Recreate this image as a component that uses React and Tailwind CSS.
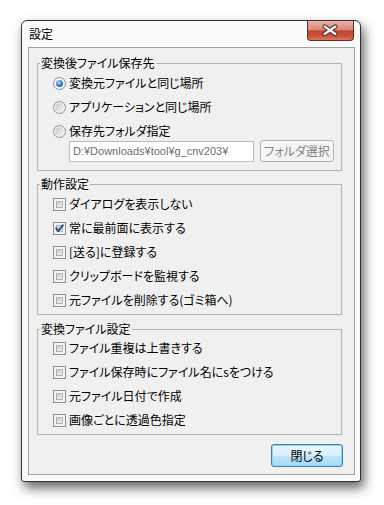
import React from "react";

function Checkbox({ checked }) {
  return (
    <div className="w-[13px] h-[13px] shrink-0 border border-[#8e8f8f] bg-[#f4f4f4] p-[2px] relative">
      <div className="w-full h-full border border-[#aeb3b9] bg-gradient-to-br from-[#c9c9c9] to-[#f4f4f4]" />
      {checked && (
        <svg className="absolute left-0 top-0" width="11" height="11" viewBox="0 0 11 11">
          <path d="M2.2 5.4 L4.4 8 L8.8 2.3" fill="none" stroke="#2a4a8c" strokeWidth="1.9" strokeLinecap="square" />
        </svg>
      )}
    </div>
  );
}

function Radio({ checked }) {
  return (
    <div className="w-[13px] h-[13px] shrink-0 rounded-full border border-[#8e8f8f] bg-[#f4f4f4] flex items-center justify-center">
      {checked ? (
        <div className="w-[7px] h-[7px] rounded-full bg-[radial-gradient(circle_at_40%_35%,#b9e2fb_0%,#3c88cf_45%,#0f3f82_100%)]" />
      ) : (
        <div className="w-[9px] h-[9px] rounded-full bg-gradient-to-br from-[#c6c6c6] to-[#f8f8f8]" />
      )}
    </div>
  );
}

function Row({ children }) {
  return <div className="h-[24px] flex items-center pl-[15px] gap-[3px]">{children}</div>;
}

function Group({ title, className, children }) {
  return (
    <fieldset className={"border border-[#b3b3b3] " + className}>
      <legend className="ml-[2px] px-[1px] text-[12px] leading-[14px] text-black">{title}</legend>
      {children}
    </fieldset>
  );
}

export default function App() {
  return (
    <div className="w-[384px] h-[505px] bg-white pl-[21px] pt-[20px] font-['Noto_Sans_CJK_JP',sans-serif] [font-feature-settings:'palt'] text-[12px] leading-[14px] text-black">
      <div className="w-[340px] flex flex-col border border-[#333333] rounded-t-[6px] rounded-b-[3px] bg-[#fafafa] shadow-[3px_6px_12px_rgba(0,0,0,0.62)]">
        {/* title bar */}
        <div className="h-[26px] flex items-start">
          <div className="pl-[7px] pt-[6px] text-[12px] leading-[14px]">設定</div>
          <div className="ml-auto mr-[6px] w-[47px] h-[20px] rounded-b-[4px] border border-t-0 border-[#6e2a20] bg-[linear-gradient(to_bottom,#eab1a5_0%,#dd8a79_45%,#c5452f_52%,#c9523a_80%,#dc7a5f_100%)] flex items-center justify-center">
            <svg width="47" height="19" viewBox="0 0 47 19">
              <path d="M17.5 5.5 L28.5 13 M28.5 5.5 L17.5 13" stroke="#4b3a3a" strokeWidth="4.6" strokeLinecap="round" />
              <path d="M17.5 5.5 L28.5 13 M28.5 5.5 L17.5 13" stroke="#ffffff" strokeWidth="2.4" strokeLinecap="round" />
            </svg>
          </div>
        </div>
        {/* frame */}
        <div className="pl-[6px] pr-[5px] pb-[6px]">
          <div className="border border-[#a3a3a3] bg-[#f0f0f0] pt-[8px] pl-[8px] pr-[12px] pb-[7px] flex flex-col">
            <Group title="変換後ファイル保存先" className="pb-[8px]">
              <div className="pt-[1px]">
                <Row><Radio checked /><span>変換元ファイルと同じ場所</span></Row>
                <Row><Radio /><span>アプリケーションと同じ場所</span></Row>
                <Row><Radio /><span>保存先フォルダ指定</span></Row>
                <div className="-mt-[3px] pl-[31px] flex items-center gap-[6px]">
                  <div className="w-[185px] h-[21px] border border-[#b9bcc1] bg-white pl-[3px] flex items-center text-[#6d6d6d] text-[11px] [font-feature-settings:normal] font-['Liberation_Sans',sans-serif]">
                    D:¥Downloads¥tool¥g_cnv203¥
                  </div>
                  <div className="w-[74px] h-[22px] rounded-[3px] border border-[#adb2b5] bg-[#f4f4f4] flex items-center justify-center text-[#838383]">
                    フォルダ選択
                  </div>
                </div>
              </div>
            </Group>
            <Group title="動作設定" className="mt-[6px] pb-[2px]">
              <div className="pt-[1px]">
                <Row><Checkbox /><span>ダイアログを表示しない</span></Row>
                <Row><Checkbox checked /><span>常に最前面に表示する</span></Row>
                <Row><Checkbox /><span>[送る]に登録する</span></Row>
                <Row><Checkbox /><span>クリップボードを監視する</span></Row>
                <Row><Checkbox /><span>元ファイルを削除する(ゴミ箱へ)</span></Row>
              </div>
            </Group>
            <Group title="変換ファイル設定" className="mt-[7px] pb-[2px]">
              <div>
                <Row><Checkbox /><span>ファイル重複は上書きする</span></Row>
                <Row><Checkbox /><span>ファイル保存時にファイル名にsをつける</span></Row>
                <Row><Checkbox /><span>元ファイル日付で作成</span></Row>
                <Row><Checkbox /><span>画像ごとに透過色指定</span></Row>
              </div>
            </Group>
            <div className="mt-[9px] flex justify-end pr-[11px] -mr-[12px]">
              <div className="w-[72px] h-[23px] rounded-[3px] border border-[#3c7fb1] shadow-[0_0_0_1px_#8fd3f5_inset] bg-[linear-gradient(to_bottom,#eaf6fd_0%,#d9f0fc_50%,#bee6fd_51%,#a7d9f5_100%)] flex items-center justify-center">
                閉じる
              </div>
            </div>
          </div>
        </div>
      </div>
    </div>
  );
}
